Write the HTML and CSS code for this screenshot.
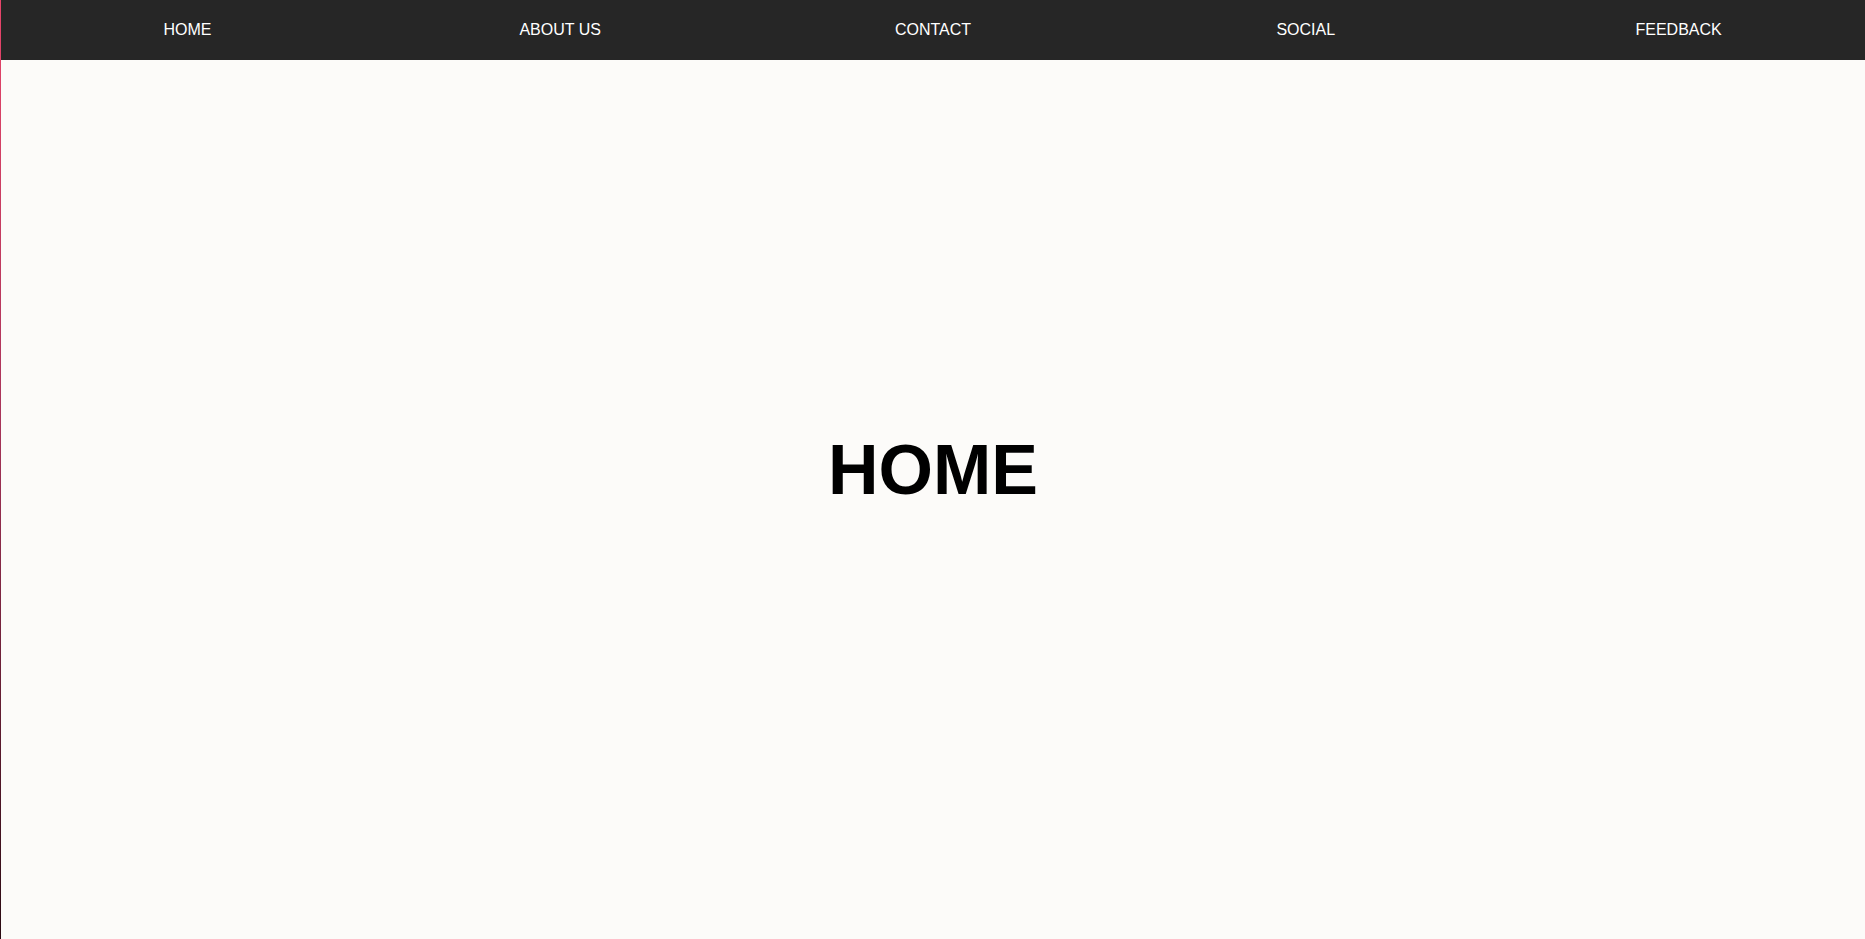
FILE: index.html
```html
<!DOCTYPE html>
<html lang="en">
<head>
<meta charset="utf-8">
<title>Home</title>
<link rel="stylesheet" href="styles.css">
</head>
<body>
<div class="page">
  <div class="edge"></div>
  <div class="main">
    <nav class="topnav">
      <a class="nav-link" href="#home">HOME</a>
      <a class="nav-link" href="#about">ABOUT US</a>
      <a class="nav-link" href="#contact">CONTACT</a>
      <a class="nav-link" href="#social">SOCIAL</a>
      <a class="nav-link" href="#feedback">FEEDBACK</a>
    </nav>
    <section class="hero" id="home">
      <h1 class="hero-title">HOME</h1>
    </section>
  </div>
</div>
</body>
</html>
```
FILE: styles.css
```css
html, body {
  margin: 0;
  padding: 0;
  height: 100%;
  overflow: hidden;
}
body {
  font-family: "Liberation Sans", Arial, sans-serif;
  background: #fcfbf9;
}
.page {
  display: flex;
  min-height: 100vh;
}
.edge {
  width: 1px;
  flex: 0 0 1px;
  background: linear-gradient(to bottom, #e8456a 0%, #a8345a 45%, #2a0a12 100%);
}
.main {
  flex: 1;
  position: relative;
}
.topnav {
  position: absolute;
  top: 0;
  left: 0;
  right: 0;
  height: 60px;
  background: #262626;
  display: grid;
  grid-template-columns: repeat(5, 1fr);
  align-items: center;
  justify-items: center;
  z-index: 2;
}
.nav-link {
  color: #ffffff;
  text-decoration: none;
  font-size: 16px;
}
.hero {
  height: 100vh;
  display: flex;
  align-items: center;
  justify-content: center;
}
.hero-title {
  margin: 0;
  font-size: 70px;
  font-weight: bold;
  color: #000000;
}
```
